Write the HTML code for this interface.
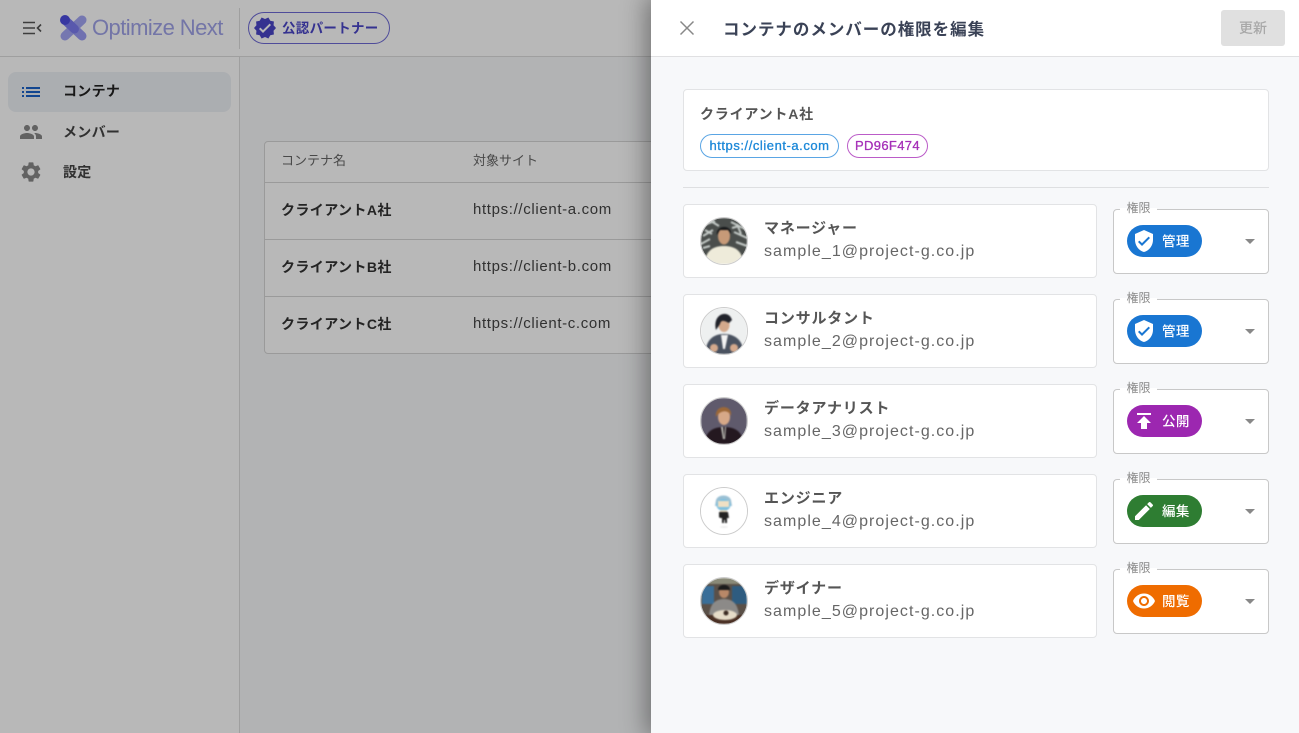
<!DOCTYPE html>
<html lang="ja"><head><meta charset="utf-8"><title>コンテナのメンバーの権限を編集</title>
<style>
*{box-sizing:border-box}
html,body{margin:0;padding:0}
body{width:1299px;height:733px;overflow:hidden;position:relative;background:#fff;font-family:"Liberation Sans","Noto Sans CJK JP",sans-serif;color:#444}
.a{position:absolute;white-space:nowrap}
svg{display:block}
.overlay{position:absolute;left:0;top:0;width:1299px;height:733px;background:rgba(0,0,0,.28)}
.drawer{position:absolute;left:651px;top:0;width:648px;height:733px;background:#f7f8fa;box-shadow:0 0 24px 4px rgba(0,0,0,.4)}
.card{position:absolute;background:#fff;border:1px solid #e2e3e5;border-radius:4px}
.nm{position:absolute;font-size:15px;font-weight:700;color:#555;letter-spacing:.82px;line-height:20px;white-space:nowrap}
.em{position:absolute;font-size:16px;color:#666;letter-spacing:1.05px;line-height:20px;white-space:nowrap}
.sel{position:absolute;left:462px;width:156px;height:65px;background:#fff;border:1px solid #c8c8c8;border-radius:4px}
.lg{position:absolute;left:469px;width:37px;height:14px;background:linear-gradient(#f7f8fa 50%,#fff 50%);font-size:12px;line-height:14px;color:#888;text-align:center}
.chip{position:absolute;left:476px;width:75px;height:32px;border-radius:16px;color:#fff;font-size:13.500px;font-weight:500;line-height:33px;padding-left:35px;letter-spacing:.4px}
.chip svg{position:absolute;left:5px;top:4px}
.arr{position:absolute;left:594px;width:0;height:0;border-left:5.500px solid transparent;border-right:5.500px solid transparent;border-top:5px solid #888}
.av{position:absolute;left:49px;width:48px;height:48px;border-radius:50%;border:1px solid #ccc;overflow:hidden;background:#fff}
.av svg{filter:blur(.7px)}
.th{font-size:13px;color:#666;line-height:16px}
.co{font-size:14px;font-weight:700;color:#333;line-height:20px;letter-spacing:.4px}
.ur{font-size:15px;color:#444;line-height:20px;letter-spacing:.65px}
.hl{position:absolute;height:1px;background:#d6d6d6}
.it{font-size:14px;font-weight:700;line-height:20px;left:63px;letter-spacing:.3px;color:#444}
</style></head><body>

<!-- background app -->
<div class="a" style="left:240px;top:57px;width:411px;height:676px;background:#f7f8fa"></div>
<div class="hl" style="left:0;top:56px;width:651px;background:#ddd"></div>
<div class="a" style="left:239px;top:57px;width:1px;height:676px;background:#ddd"></div>
<div class="a" style="left:239px;top:8px;width:1px;height:41px;background:#ddd"></div>

<svg class="a" style="left:22px;top:20px" width="20" height="16" viewBox="0 0 20 16"><path d="M1 2.500h12M1 8h12M1 13.500h12" stroke="#555" stroke-width="1.600" fill="none"/><path d="M19 4.500L15.500 8L19 11.500" stroke="#555" stroke-width="1.600" fill="none"/></svg>

<svg class="a" style="left:59px;top:14px" width="29" height="28" viewBox="0 0 29 28"><path d="M6 22L23 6" stroke="#a2a5f4" stroke-width="9" stroke-linecap="round"/><path d="M6 6L23 22" stroke="#9a9cf4" stroke-width="9" stroke-linecap="round"/><path d="M8 8L15.500 15" stroke="#7c7cf0" stroke-width="9" stroke-linecap="round"/><circle cx="6" cy="6" r="5" fill="#4d4de0"/></svg>
<div class="a" style="left:92px;top:14px;font-size:22px;line-height:28px;color:#a0a3e8;letter-spacing:-.57px">Optimize Next</div>

<div class="a" style="left:248px;top:12px;width:142px;height:32px;border:1px solid #6e6ad6;border-radius:16px"></div>
<svg class="a" style="left:253px;top:16px" width="24" height="24" viewBox="0 0 24 24"><path fill="#4a46c8" d="M23 12l-2.440-2.780.340-3.680-3.610-.820-1.890-3.180L12 3 8.600 1.540 6.710 4.720l-3.610.810.340 3.680L1 12l2.440 2.780-.340 3.690 3.610.820 1.890 3.180L12 21l3.400 1.460 1.890-3.180 3.610-.820-.340-3.680L23 12zm-13 5l-4-4 1.410-1.410L10 14.170l6.590-6.590L18 9l-8 8z"/></svg>
<div class="a" style="left:282px;top:19px;font-size:13.500px;font-weight:700;line-height:20px;color:#4a46c8;letter-spacing:.3px">公認パートナー</div>

<div class="a" style="left:8px;top:72px;width:223px;height:40px;border-radius:8px;background:#eef1f6"></div>
<svg class="a" style="left:19px;top:80px" width="24" height="24" viewBox="0 0 24 24"><path fill="#1a62c8" d="M3 13h2v-2H3v2zm0 4h2v-2H3v2zm0-8h2V7H3v2zm4 4h14v-2H7v2zm0 4h14v-2H7v2zM7 7v2h14V7H7z"/></svg>
<div class="a it" style="top:81px;color:#222">コンテナ</div>
<svg class="a" style="left:19px;top:120px" width="24" height="24" viewBox="0 0 24 24"><path fill="#888" d="M16 11c1.660 0 2.990-1.340 2.990-3S17.660 5 16 5c-1.660 0-3 1.340-3 3s1.340 3 3 3zm-8 0c1.660 0 2.990-1.340 2.990-3S9.660 5 8 5C6.340 5 5 6.340 5 8s1.340 3 3 3zm0 2c-2.330 0-7 1.170-7 3.500V19h14v-2.500c0-2.330-4.670-3.500-7-3.500zm8 0c-.290 0-.620.020-.970.050 1.160.840 1.970 1.970 1.970 3.450V19h6v-2.500c0-2.330-4.670-3.500-7-3.500z"/></svg>
<div class="a it" style="top:122px">メンバー</div>
<svg class="a" style="left:19px;top:160px" width="24" height="24" viewBox="0 0 24 24"><path fill="#888" d="M19.140 12.940c.040-.300.060-.610.060-.940 0-.320-.020-.640-.070-.940l2.030-1.580c.180-.140.230-.410.120-.610l-1.920-3.320c-.120-.220-.370-.290-.590-.220l-2.390.960c-.500-.380-1.030-.700-1.620-.940l-.360-2.540c-.040-.240-.240-.410-.480-.410h-3.840c-.240 0-.430.170-.470.410l-.360 2.540c-.590.240-1.130.570-1.620.940l-2.390-.960c-.220-.080-.470 0-.590.220L2.740 8.870c-.120.210-.080.470.120.610l2.030 1.580c-.050.300-.090.630-.090.940s.020.640.07.940l-2.030 1.580c-.180.140-.230.410-.120.610l1.920 3.320c.120.220.370.290.590.220l2.390-.960c.500.380 1.030.700 1.620.940l.360 2.540c.050.240.240.410.48.410h3.840c.240 0 .440-.17.470-.41l.360-2.540c.590-.240 1.130-.560 1.620-.940l2.390.960c.220.080.470 0 .590-.22l1.920-3.320c.120-.220.070-.470-.120-.61l-2.010-1.580zM12 15.600c-1.980 0-3.600-1.620-3.600-3.600s1.620-3.600 3.600-3.600 3.600 1.620 3.600 3.600-1.620 3.600-3.600 3.600z"/></svg>
<div class="a it" style="top:162px">設定</div>

<!-- table -->
<div class="a" style="left:264px;top:141px;width:420px;height:213px;background:#fff;border:1px solid #d6d6d6;border-radius:4px"></div>
<div class="hl" style="left:265px;top:182px;width:400px"></div>
<div class="hl" style="left:265px;top:239px;width:400px"></div>
<div class="hl" style="left:265px;top:296px;width:400px"></div>
<div class="a th" style="left:281px;top:153px">コンテナ名</div>
<div class="a th" style="left:473px;top:153px">対象サイト</div>
<div class="a co" style="left:281px;top:200px">クライアントA社</div>
<div class="a ur" style="left:473px;top:200px">https://client-a.com</div>
<div class="a co" style="left:281px;top:257px">クライアントB社</div>
<div class="a ur" style="left:473px;top:257px">https://client-b.com</div>
<div class="a co" style="left:281px;top:314px">クライアントC社</div>
<div class="a ur" style="left:473px;top:314px">https://client-c.com</div>

<div class="overlay"></div>

<!-- drawer -->
<div class="drawer">
  <div class="a" style="left:0;top:0;width:648px;height:57px;background:#fff;border-bottom:1px solid #e0e0e2"></div>
  <svg class="a" style="left:28px;top:20px" width="16" height="16" viewBox="0 0 16 16"><path d="M1.500 1.500L14.500 14.500M14.500 1.500L1.500 14.500" stroke="#888" stroke-width="1.500" fill="none"/></svg>
  <div class="a" style="left:72px;top:18px;font-size:16.500px;font-weight:700;line-height:24px;color:#3a4256;letter-spacing:.97px">コンテナのメンバーの権限を編集</div>
  <div class="a" style="left:570px;top:10px;width:64px;height:36px;background:#e0e0e0;border-radius:3px;text-align:center;font-size:14px;font-weight:500;line-height:36px;color:#a8a8a8">更新</div>

  <div class="card" style="left:32px;top:89px;width:586px;height:82px"></div>
  <div class="a" style="left:49px;top:104px;font-size:14px;font-weight:700;line-height:20px;color:#555;letter-spacing:.8px">クライアントA社</div>
  <div class="a" style="left:49px;top:134px;width:139px;height:24px;border:1px solid #5aa5e4;border-radius:12px;background:#fff;text-align:center;font-size:13px;line-height:22px;color:#1c88d8;letter-spacing:.55px;-webkit-text-stroke:.3px #1c88d8">https://client-a.com</div>
  <div class="a" style="left:196px;top:134px;width:81px;height:24px;border:1px solid #bb5cc8;border-radius:12px;background:#fff;text-align:center;font-size:13px;line-height:22px;color:#a52eb8;letter-spacing:.35px;-webkit-text-stroke:.3px #a52eb8">PD96F474</div>
  <div class="hl" style="left:32px;top:187px;width:586px;background:#dedfe1"></div>

  <!-- row 1 -->
  <div class="card" style="left:32px;top:204px;width:414px;height:74px"></div>
  <div class="av" style="top:217px"><svg width="46" height="46" viewBox="0 0 46 46"><rect width="46" height="46" fill="#4a4e4c"/><path d="M0 8L14 3M2 18L12 12M0 26L9 21M30 4L46 12M33 14L46 20M35 24L46 28M8 2L18 8M4 12L11 16M36 6L40 16M2 30L9 28M31 10L38 8" stroke="#c5cbc8" stroke-width="2"/><path d="M4 46C4 33 12 28 23 28s19 5 19 18z" fill="#eeebda"/><ellipse cx="23" cy="18" rx="6" ry="8.500" fill="#c79a78"/><path d="M16 17C14 7 31 6 30 16L27 12H19z" fill="#16181a"/></svg></div>
  <div class="nm" style="left:113px;top:219px">マネージャー</div>
  <div class="em" style="left:113px;top:242px">sample_1@project-g.co.jp</div>
  <div class="sel" style="top:209px"></div>
  <div class="lg" style="top:201px">権限</div>
  <div class="chip" style="top:225px;background:#1976d2">管理<svg width="24" height="24" viewBox="0 0 24 24"><path fill="#fff" d="M12 1L3 5v6c0 5.550 3.840 10.740 9 12 5.160-1.260 9-6.450 9-12V5l-9-4zm-2 16l-4-4 1.410-1.410L10 14.170l6.590-6.590L18 9l-8 8z"/></svg></div>
  <div class="arr" style="top:239px"></div>

  <!-- row 2 -->
  <div class="card" style="left:32px;top:294px;width:414px;height:74px"></div>
  <div class="av" style="top:307px"><svg width="46" height="46" viewBox="0 0 46 46"><rect width="46" height="46" fill="#eef0f0"/><path d="M4 46C5 32 12 26 23 26s19 6 20 20z" fill="#4a5260"/><path d="M20 27h7l-3 14h-2z" fill="#f4f4f4"/><ellipse cx="23" cy="17" rx="5.500" ry="7" fill="#d4a98c"/><path d="M15 22C11 5 28 1 31 12L28 15C24 13 20 11 19 16z" fill="#20222a"/><circle cx="13" cy="40" r="4" fill="#d4a98c"/><circle cx="33" cy="40" r="4" fill="#d4a98c"/></svg></div>
  <div class="nm" style="left:113px;top:309px">コンサルタント</div>
  <div class="em" style="left:113px;top:332px">sample_2@project-g.co.jp</div>
  <div class="sel" style="top:299px"></div>
  <div class="lg" style="top:291px">権限</div>
  <div class="chip" style="top:315px;background:#1976d2">管理<svg width="24" height="24" viewBox="0 0 24 24"><path fill="#fff" d="M12 1L3 5v6c0 5.550 3.840 10.740 9 12 5.160-1.260 9-6.450 9-12V5l-9-4zm-2 16l-4-4 1.410-1.410L10 14.170l6.590-6.590L18 9l-8 8z"/></svg></div>
  <div class="arr" style="top:329px"></div>

  <!-- row 3 -->
  <div class="card" style="left:32px;top:384px;width:414px;height:74px"></div>
  <div class="av" style="top:397px"><svg width="46" height="46" viewBox="0 0 46 46"><rect width="46" height="46" fill="#5f5a6c"/><path d="M3 46C5 33 12 29 23 29s18 4 20 17z" fill="#241820"/><path d="M20 29h2l1 12h-1zM25 29h-1l-1 12h1z" fill="#c8c8c0"/><ellipse cx="23" cy="19" rx="6" ry="8" fill="#d6a888"/><path d="M15 19C13 6 32 6 30 18C28 12 20 11 15 19z" fill="#9c6838"/></svg></div>
  <div class="nm" style="left:113px;top:399px">データアナリスト</div>
  <div class="em" style="left:113px;top:422px">sample_3@project-g.co.jp</div>
  <div class="sel" style="top:389px"></div>
  <div class="lg" style="top:381px">権限</div>
  <div class="chip" style="top:405px;background:#9c27b0">公開<svg width="24" height="24" viewBox="0 0 24 24"><path fill="#fff" d="M5 4v2h14V4H5zm0 10h4v6h6v-6h4l-7-7-7 7z"/></svg></div>
  <div class="arr" style="top:419px"></div>

  <!-- row 4 -->
  <div class="card" style="left:32px;top:474px;width:414px;height:74px"></div>
  <div class="av" style="top:487px"><svg width="46" height="46" viewBox="0 0 46 46"><rect width="46" height="46" fill="#fff"/><path d="M15 12C17 6 28 6 30 12L31 18H14z" fill="#9ac0d4"/><ellipse cx="22.500" cy="17" rx="7" ry="6" fill="#7cc0e0"/><rect x="17" y="13" width="11" height="6" fill="#f0e0c4"/><path d="M18 24h9l1 6h-2v5h-2v-3h-1v3h-2v-5h-2l-1-1z" fill="#222"/><rect x="19" y="22" width="7" height="2" fill="#e0d4bc"/><ellipse cx="23" cy="39" rx="4" ry="1" fill="#eee"/></svg></div>
  <div class="nm" style="left:113px;top:489px">エンジニア</div>
  <div class="em" style="left:113px;top:512px">sample_4@project-g.co.jp</div>
  <div class="sel" style="top:479px"></div>
  <div class="lg" style="top:471px">権限</div>
  <div class="chip" style="top:495px;background:#2e7d32">編集<svg width="24" height="24" viewBox="0 0 24 24"><path fill="#fff" d="M3 17.250V21h3.750L17.810 9.940l-3.750-3.750L3 17.250zM20.710 7.040c.390-.390.390-1.020 0-1.410l-2.340-2.340c-.390-.390-1.020-.390-1.410 0l-1.830 1.830 3.750 3.750 1.830-1.830z"/></svg></div>
  <div class="arr" style="top:509px"></div>

  <!-- row 5 -->
  <div class="card" style="left:32px;top:564px;width:414px;height:74px"></div>
  <div class="av" style="top:577px"><svg width="46" height="46" viewBox="0 0 46 46"><rect width="46" height="46" fill="#5a5048"/><rect width="46" height="6" fill="#8a8a78"/><rect x="1" y="8" width="12" height="18" fill="#3a6e98"/><rect x="31" y="8" width="15" height="18" fill="#2e5c80"/><path d="M8 38C9 25 15 21 23 21s14 4 15 17z" fill="#8c8a88"/><ellipse cx="23" cy="14" rx="5" ry="6" fill="#b88868"/><path d="M17 12C17 5 29 5 29 12z" fill="#1c1c1c"/><rect y="37" width="46" height="9" fill="#4a3024"/><ellipse cx="24" cy="37" rx="12" ry="5" fill="#e6dcc8"/><circle cx="25" cy="35" r="2.500" fill="#3a2a22"/></svg></div>
  <div class="nm" style="left:113px;top:579px">デザイナー</div>
  <div class="em" style="left:113px;top:602px">sample_5@project-g.co.jp</div>
  <div class="sel" style="top:569px"></div>
  <div class="lg" style="top:561px">権限</div>
  <div class="chip" style="top:585px;background:#ef6c00">閲覧<svg width="24" height="24" viewBox="0 0 24 24"><path fill="#fff" d="M12 4.500C7 4.500 2.730 7.610 1 12c1.730 4.390 6 7.500 11 7.500s9.270-3.110 11-7.500c-1.730-4.390-6-7.500-11-7.500zM12 17c-2.760 0-5-2.240-5-5s2.240-5 5-5 5 2.240 5 5-2.240 5-5 5zm0-8c-1.660 0-3 1.340-3 3s1.340 3 3 3 3-1.340 3-3-1.340-3-3-3z"/></svg></div>
  <div class="arr" style="top:599px"></div>
</div>
</body></html>
